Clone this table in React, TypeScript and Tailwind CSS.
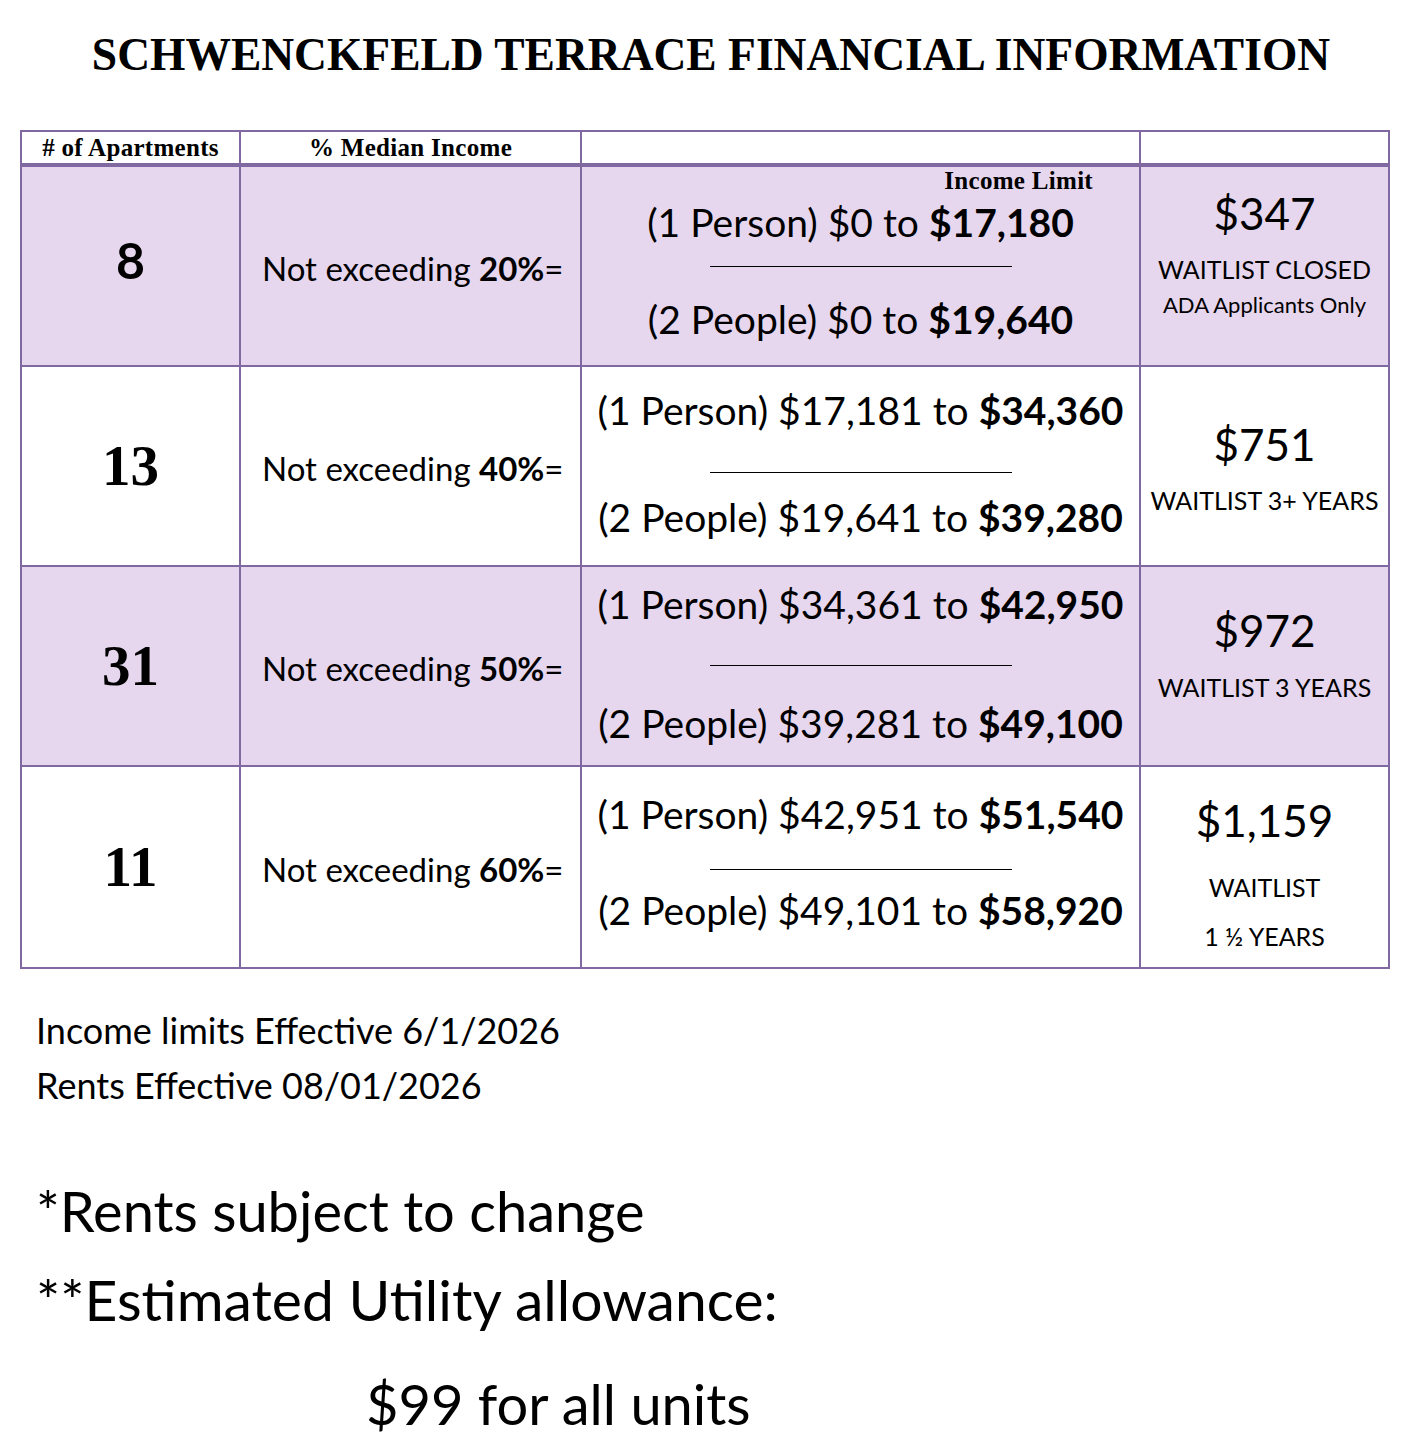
import React from 'react';

const BODY = "font-['Lato','Noto_Sans',sans-serif]";
const SERIF = "font-['Liberation_Serif','DejaVu_Serif',serif]";
const LINE = 'border-[#8068a0]';
const COLS = 'grid-cols-[219px_341px_559px_1fr]';

// per-row vertical offsets (px) measured from the reference
const ROWS = [
  {
    count: '8',
    countSans: true,
    pct: '20%',
    one: ['$0', '$17,180'],
    two: ['$0', '$19,640'],
    rent: '$347',
    shaded: true,
    label: true,
    notes: ['WAITLIST CLOSED'],
    small: 'ADA Applicants Only',
    range: 'pt-[36px]',
    gapA: 'mt-[24px]',
    gapB: 'mt-[33px]',
    rentTop: 'pt-[24px]',
    noteGap: 'mt-[22px]',
  },
  {
    count: '13',
    pct: '40%',
    one: ['$17,181', '$34,360'],
    two: ['$19,641', '$39,280'],
    rent: '$751',
    notes: ['WAITLIST 3+ YEARS'],
    range: 'pt-[24px]',
    gapA: 'mt-[42px]',
    gapB: 'mt-[25px]',
    rentTop: 'pt-[55px]',
    noteGap: 'mt-[22px]',
  },
  {
    count: '31',
    pct: '50%',
    one: ['$34,361', '$42,950'],
    two: ['$39,281', '$49,100'],
    rent: '$972',
    shaded: true,
    notes: ['WAITLIST 3 YEARS'],
    range: 'pt-[18px]',
    gapA: 'mt-[41px]',
    gapB: 'mt-[38px]',
    rentTop: 'pt-[41px]',
    noteGap: 'mt-[23px]',
  },
  {
    count: '11',
    pct: '60%',
    one: ['$42,951', '$51,540'],
    two: ['$49,101', '$58,920'],
    rent: '$1,159',
    notes: ['WAITLIST', '1 ½ YEARS'],
    range: 'pt-[28px]',
    gapA: 'mt-[35px]',
    gapB: 'mt-[21px]',
    rentTop: 'pt-[31px]',
    noteGap: 'mt-[33px]',
  },
];

type Row = (typeof ROWS)[number] & { countSans?: boolean; label?: boolean; small?: string };

function Range({ who, from, to }: { who: string; from: string; to: string }) {
  return (
    <p className="text-[39px] leading-none whitespace-nowrap text-black">
      ({who}) {from} to <span className="font-bold">{to}</span>
    </p>
  );
}

function TableRow({ row, last }: { row: Row; last: boolean }) {
  const bg = row.shaded ? 'bg-[#e6d6ee]' : 'bg-white';
  return (
    <div className={`grid h-[200px] ${COLS} ${bg} ${last ? '' : `border-b-2 ${LINE}`}`}>
      <div className={`flex items-center justify-center border-r-2 ${LINE} ${row.countSans ? 'pb-[12px]' : ''}`}>
        <span className={`${row.countSans ? `${BODY} text-[50px]` : `${SERIF} text-[57px]`} font-bold leading-none text-black`}>
          {row.count}
        </span>
      </div>
      <div className={`flex items-center border-r-2 pl-[21px] pt-[6px] ${LINE}`}>
        <p className="text-[33px] whitespace-nowrap text-black">
          Not exceeding <span className="font-bold">{row.pct}</span>=
        </p>
      </div>
      <div className={`relative flex flex-col items-center border-r-2 ${row.range} ${LINE}`}>
        {row.label && (
          <span className={`${SERIF} absolute right-[46px] top-[1px] text-[25px] leading-none font-bold tracking-[0.3px] text-black`}>
            Income Limit
          </span>
        )}
        <Range who="1 Person" from={row.one[0]} to={row.one[1]} />
        <div className={`${row.gapA} h-[1.5px] w-[302px] bg-black`} />
        <div className={row.gapB}>
          <Range who="2 People" from={row.two[0]} to={row.two[1]} />
        </div>
      </div>
      <div className={`flex flex-col items-center text-black ${row.rentTop}`}>
        <p className="text-[44px] leading-none">{row.rent}</p>
        <div className={`${row.noteGap} flex flex-col items-center ${row.notes.length > 1 ? 'gap-[24px]' : ''}`}>
          {row.notes.map((n) => (
            <p key={n} className="text-[25px] leading-none whitespace-nowrap">{n}</p>
          ))}
        </div>
        {row.small && <p className="mt-[12px] text-[22px] leading-none whitespace-nowrap">{row.small}</p>}
      </div>
    </div>
  );
}

export default function App() {
  return (
    <div className={`${BODY} min-h-[1446px] w-[1410px] bg-white`}>
      <h1 className={`${SERIF} pl-[12px] pt-[27px] text-center text-[45.5px] leading-tight font-bold text-black`}>
        SCHWENCKFELD TERRACE FINANCIAL INFORMATION
      </h1>

      <div className={`ml-[20px] mt-[46px] w-[1370px] border-2 ${LINE}`}>
        <div className={`grid h-[35px] ${COLS} border-b-4 ${LINE}`}>
          <div className={`flex items-center justify-center border-r-2 ${LINE}`}>
            <span className={`${SERIF} text-[25px] leading-none font-bold tracking-[0.3px] text-black`}># of Apartments</span>
          </div>
          <div className={`flex items-center justify-center border-r-2 ${LINE}`}>
            <span className={`${SERIF} text-[25px] leading-none font-bold tracking-[0.3px] text-black`}>% Median Income</span>
          </div>
          <div className={`border-r-2 ${LINE}`} />
          <div />
        </div>
        {ROWS.map((row, i) => (
          <TableRow key={row.count} row={row as Row} last={i === ROWS.length - 1} />
        ))}
      </div>

      <div className="pl-[36px] pt-[34px] text-black">
        <p className="text-[36px] leading-[55px]">Income limits Effective 6/1/2026</p>
        <p className="text-[36px] leading-[55px]">Rents Effective 08/01/2026</p>
        <p className="mt-[54px] text-[56px] leading-[88px]">*Rents subject to change</p>
        <p className="text-[57px] leading-[88px]">**Estimated Utility allowance:</p>
        <p className="mt-[17px] pl-[330px] text-[56px] leading-[88px]">$99 for all units</p>
      </div>
    </div>
  );
}
